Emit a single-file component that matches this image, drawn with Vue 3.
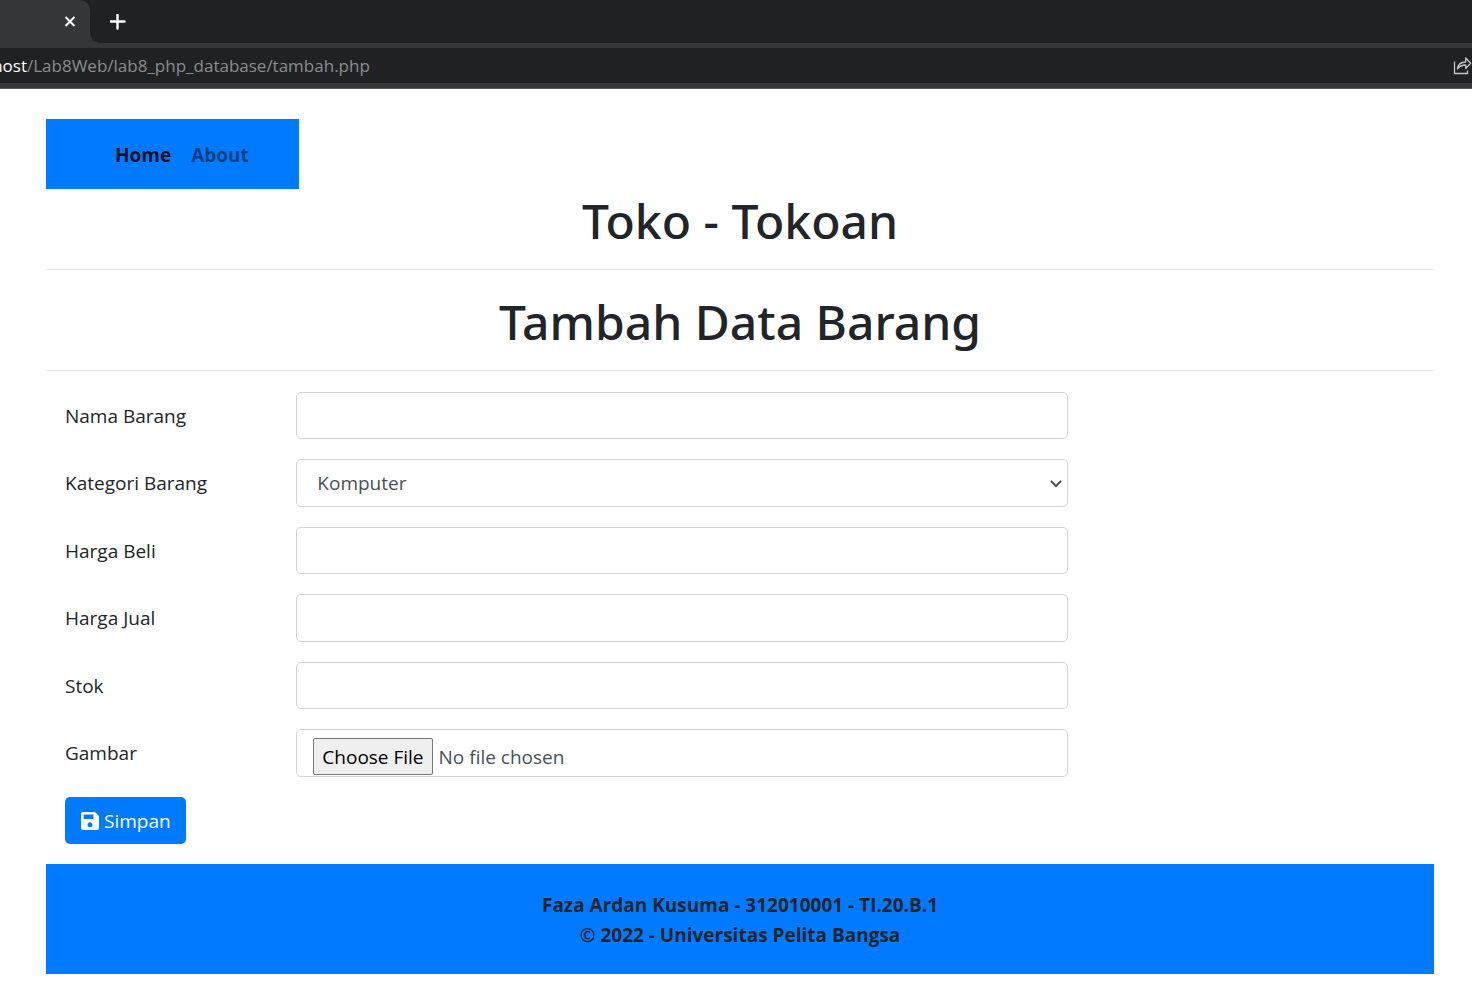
<script setup>
import { ref } from 'vue'

const rows = [
  { id: 'nama', label: 'Nama Barang', kind: 'text' },
  { id: 'kategori', label: 'Kategori Barang', kind: 'select' },
  { id: 'harga_beli', label: 'Harga Beli', kind: 'text' },
  { id: 'harga_jual', label: 'Harga Jual', kind: 'text' },
  { id: 'stok', label: 'Stok', kind: 'text' },
  { id: 'gambar', label: 'Gambar', kind: 'file' },
]
const values = ref({ nama: '', kategori: 'Komputer', harga_beli: '', harga_jual: '', stok: '' })
</script>

<template>
  <div class="browser">
    <div class="tabs">
      <div class="tab">
        <button class="icon-btn" type="button" aria-label="Close tab">
          <svg width="12" height="12" viewBox="0 0 12 12"><path d="M1.5 1l9 9M10.5 1l-9 9" stroke="#fff" stroke-width="2" fill="none" /></svg>
        </button>
      </div>
      <div class="curve"></div>
      <button class="icon-btn plus" type="button" aria-label="New tab">
        <svg width="16" height="16" viewBox="0 0 16 16"><path d="M7.500 .5v14M.5 7.500h14" stroke="#fff" stroke-width="2.400" stroke-linecap="round" fill="none" /></svg>
      </button>
    </div>
    <div class="address">
      <span class="host"><span>host</span></span>
      <span class="path">/Lab8Web/lab8_php_database/tambah.php</span>
      <button class="icon-btn share" type="button" aria-label="Share">
        <svg width="19" height="18" viewBox="0 0 19 18" fill="none" stroke="#c4c6c9" stroke-width="1.3">
          <path d="M1.500 4.500v12h13v-3" />
          <path d="M4.500 12c.3-4.200 2.800-6.800 8.200-7V1l5 5.300-5 5.200V8c-4 0-6.300 1.200-8.200 4z" stroke-linejoin="round" />
        </svg>
      </button>
    </div>
  </div>

  <main class="page">
    <nav class="nav">
      <a class="active" href="#">Home</a>
      <a href="#">About</a>
    </nav>
    <h1>Toko - Tokoan</h1>
    <hr />
    <h1>Tambah Data Barang</h1>
    <hr />
    <form class="form" @submit.prevent>
      <div v-for="row in rows" :key="row.id" class="row">
        <label :for="row.id">{{ row.label }}</label>
        <div class="field">
          <template v-if="row.kind === 'select'">
            <select :id="row.id" v-model="values[row.id]" class="control">
              <option>Komputer</option>
              <option>Elektronik</option>
              <option>Hand Phone</option>
            </select>
            <svg class="chevron" width="12" height="8" viewBox="0 0 12 8"><path d="M1 1l5 5 5-5" stroke="#495057" stroke-width="2" fill="none" /></svg>
          </template>
          <input v-else-if="row.kind === 'file'" :id="row.id" class="control file" type="file" />
          <input v-else :id="row.id" v-model="values[row.id]" class="control" type="text" />
        </div>
      </div>
      <div class="row">
        <div class="action">
          <button class="save" type="submit">
            <svg width="18" height="18" viewBox="0 0 18 18">
              <path fill="#fff" fill-rule="evenodd" d="M2 0h11.200q.8 0 1.400.6l2.800 2.800q.6.6.6 1.400V16q0 2-2 2H2q-2 0-2-2V2q0-2 2-2zM2.600 2.600v4.500h9.800V2.600zM9 10.200a2.500 2.500 0 1 0 .01 0z" />
            </svg>
            Simpan
          </button>
        </div>
      </div>
    </form>
    <footer class="footer">
      <div>Faza Ardan Kusuma - 312010001 - TI.20.B.1</div>
      <div>© 2022 - Universitas Pelita Bangsa</div>
    </footer>
  </main>
</template>

<style>
body {
  background: #fff;
}
</style>

<style scoped>
.browser,
.page {
  font-family: "Open Sans", "Noto Sans", sans-serif;
  font-size: 19px;
  line-height: 30px;
  color: #212529;
}
.browser {
  background: #35363a;
  border-bottom: 1px solid #5b5c5f;
}
.tabs {
  display: flex;
  align-items: center;
  height: 43px;
  background: #202124;
}
.tab {
  display: flex;
  align-items: center;
  justify-content: flex-end;
  width: 90px;
  height: 43px;
  box-sizing: border-box;
  padding-right: 14px;
  background: #35363a;
  border-top-right-radius: 10px;
}
.curve {
  align-self: flex-end;
  width: 10px;
  height: 10px;
  background: radial-gradient(circle at 100% 0, #202124 10px, #35363a 10px);
}
.icon-btn {
  display: flex;
  padding: 0;
  border: 0;
  background: none;
}
.plus {
  margin-left: 10px;
}
.address {
  display: flex;
  align-items: center;
  height: 35px;
  margin: 5px 0;
  background: #202124;
  color: #8b8d91;
  font-size: 17px;
}
.host {
  display: flex;
  justify-content: flex-end;
  width: 27px;
  overflow: hidden;
  color: #fff;
}
.share {
  margin-left: auto;
}
.page {
  padding: 30px 38px 23px 46px;
}
.nav {
  display: flex;
  gap: 20px;
  width: fit-content;
  padding: 21px 50px 19px 69px;
  background: #007bff;
  font-weight: 700;
}
.nav a {
  color: rgba(0, 0, 0, 0.5);
  text-decoration: none;
}
.nav .active {
  color: rgba(0, 0, 0, 0.9);
}
h1 {
  margin: 0;
  padding-top: 4px;
  font-family: "Noto Sans", "Open Sans", sans-serif;
  font-size: 48px;
  line-height: 56px;
  font-weight: 500;
  text-align: center;
}
hr {
  margin: 20px 0;
  border: 0;
  border-top: 1px solid rgba(0, 0, 0, 0.1);
}
.form {
  display: grid;
  gap: 20px;
  padding: 1px 0 20px;
}
.row {
  display: grid;
  grid-template-columns: 2fr 7fr 3fr;
  grid-template-rows: 100%;
  height: 47px;
}
.row:nth-child(even) {
  height: 48px;
}
.row label,
.action {
  padding-left: 19px;
}
.row label {
  align-self: center;
}
.field {
  position: relative;
  padding: 0 19px;
}
.control {
  display: block;
  width: 100%;
  height: 100%;
  box-sizing: border-box;
  padding: 8px 16px;
  border: 1px solid #ced4da;
  border-radius: 5px;
  background: #fff;
  color: #495057;
  font: inherit;
}
select.control {
  appearance: none;
  padding-left: 20px;
}
.chevron {
  position: absolute;
  right: 25px;
  top: 21px;
}
.file {
  overflow: hidden;
}
.file::file-selector-button {
  height: 37px;
  margin-right: 6px;
  padding: 1px 8px;
  border: 1px solid #767676;
  border-radius: 2px;
  background: #efefef;
  color: #000;
  font: inherit;
}
.save {
  display: flex;
  align-items: center;
  gap: 5px;
  height: 47px;
  padding: 0 15px 0 16px;
  border: 0;
  border-radius: 5px;
  background: #007bff;
  color: #fff;
  font: inherit;
}
.footer {
  padding: 26px 0 24px;
  background: #007bff;
  font-weight: 700;
  text-align: center;
}
</style>
